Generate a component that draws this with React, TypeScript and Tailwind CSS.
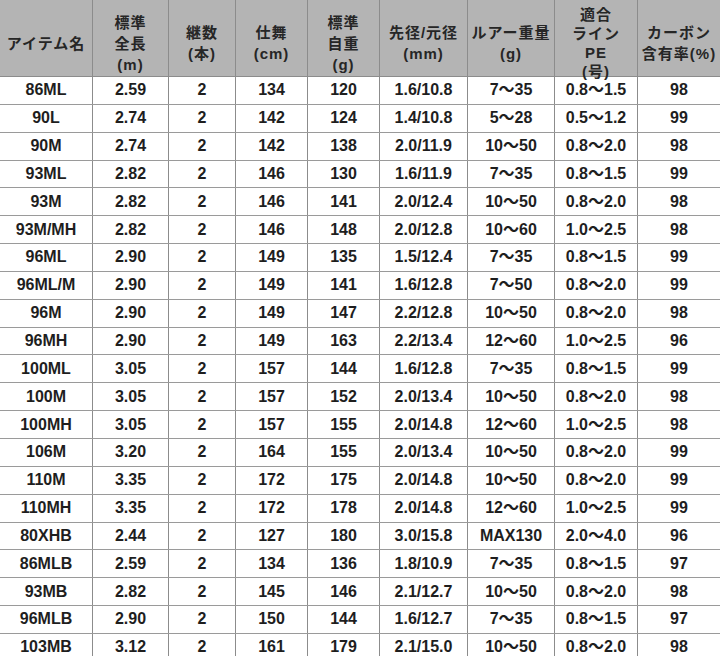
const COLS = "grid grid-cols-[92px_76px_67px_72px_72px_88px_87px_83px_83px]";

const HEADERS: string[][] = [
  ["アイテム名"],
  ["標準", "全長", "(m)"],
  ["継数", "(本)"],
  ["仕舞", "(cm)"],
  ["標準", "自重", "(g)"],
  ["先径/元径", "(mm)"],
  ["ルアー重量", "(g)"],
  ["適合", "ライン", "PE", "(号)"],
  ["カーボン", "含有率(%)"],
];

const ROWS: string[][] = [
  ["86ML", "2.59", "2", "134", "120", "1.6/10.8", "7〜35", "0.8〜1.5", "98"],
  ["90L", "2.74", "2", "142", "124", "1.4/10.8", "5〜28", "0.5〜1.2", "99"],
  ["90M", "2.74", "2", "142", "138", "2.0/11.9", "10〜50", "0.8〜2.0", "98"],
  ["93ML", "2.82", "2", "146", "130", "1.6/11.9", "7〜35", "0.8〜1.5", "99"],
  ["93M", "2.82", "2", "146", "141", "2.0/12.4", "10〜50", "0.8〜2.0", "98"],
  ["93M/MH", "2.82", "2", "146", "148", "2.0/12.8", "10〜60", "1.0〜2.5", "98"],
  ["96ML", "2.90", "2", "149", "135", "1.5/12.4", "7〜35", "0.8〜1.5", "99"],
  ["96ML/M", "2.90", "2", "149", "141", "1.6/12.8", "7〜50", "0.8〜2.0", "99"],
  ["96M", "2.90", "2", "149", "147", "2.2/12.8", "10〜50", "0.8〜2.0", "98"],
  ["96MH", "2.90", "2", "149", "163", "2.2/13.4", "12〜60", "1.0〜2.5", "96"],
  ["100ML", "3.05", "2", "157", "144", "1.6/12.8", "7〜35", "0.8〜1.5", "99"],
  ["100M", "3.05", "2", "157", "152", "2.0/13.4", "10〜50", "0.8〜2.0", "98"],
  ["100MH", "3.05", "2", "157", "155", "2.0/14.8", "12〜60", "1.0〜2.5", "98"],
  ["106M", "3.20", "2", "164", "155", "2.0/13.4", "10〜50", "0.8〜2.0", "99"],
  ["110M", "3.35", "2", "172", "175", "2.0/14.8", "10〜50", "0.8〜2.0", "99"],
  ["110MH", "3.35", "2", "172", "178", "2.0/14.8", "12〜60", "1.0〜2.5", "99"],
  ["80XHB", "2.44", "2", "127", "180", "3.0/15.8", "MAX130", "2.0〜4.0", "96"],
  ["86MLB", "2.59", "2", "134", "136", "1.8/10.9", "7〜35", "0.8〜1.5", "97"],
  ["93MB", "2.82", "2", "145", "146", "2.1/12.7", "10〜50", "0.8〜2.0", "98"],
  ["96MLB", "2.90", "2", "150", "144", "1.6/12.7", "7〜35", "0.8〜1.5", "97"],
  ["103MB", "3.12", "2", "161", "179", "2.1/15.0", "10〜50", "0.8〜2.0", "98"],
];

export default function App() {
  return (
    <div className="h-[656px] w-[720px] overflow-hidden bg-white font-['Liberation_Sans','Noto_Sans_CJK_JP',sans-serif] text-[#1e1e1e]">
      <div className={`${COLS} h-[77px] border-b border-[#8c8c8c] bg-[#b4b4b4]`}>
        {HEADERS.map((lines, i) => (
          <div
            key={i}
            className={`flex flex-col items-center justify-center pt-[5px] text-[15px] font-bold tracking-[1px] text-[#262626] ${
              lines.length > 3 ? "leading-[19px]" : "leading-[21px]"
            } ${i > 0 ? "border-l border-[#8c8c8c]" : ""}`}
          >
            {lines.map((l) => (
              <span key={l} className="whitespace-nowrap">
                {l}
              </span>
            ))}
          </div>
        ))}
      </div>
      {ROWS.map((row) => (
        <div key={row[0]} className={`${COLS} h-[27.85px] border-b border-[#9a9a9a]`}>
          {row.map((cell, i) => (
            <div
              key={i}
              className={`flex items-center justify-center text-[16px] font-bold ${
                i > 0 ? "border-l border-[#8c8c8c]" : ""
              }`}
            >
              {cell}
            </div>
          ))}
        </div>
      ))}
    </div>
  );
}
